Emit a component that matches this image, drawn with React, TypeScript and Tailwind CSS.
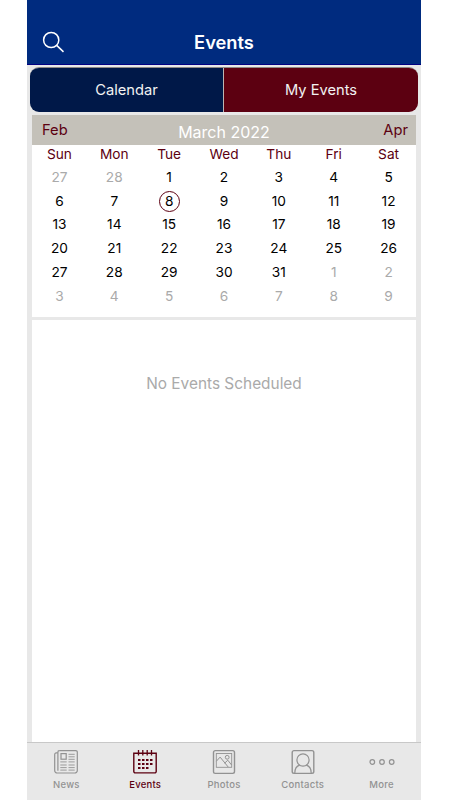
import React from "react";

const DAYS = ["Sun", "Mon", "Tue", "Wed", "Thu", "Fri", "Sat"];
const WEEKS = [
  [27, 28, 1, 2, 3, 4, 5],
  [6, 7, 8, 9, 10, 11, 12],
  [13, 14, 15, 16, 17, 18, 19],
  [20, 21, 22, 23, 24, 25, 26],
  [27, 28, 29, 30, 31, 1, 2],
  [3, 4, 5, 6, 7, 8, 9],
];

function isOutside(week: number, day: number) {
  return (week === 0 && day > 20) || (week >= 4 && day < 20);
}

function Icon({ children }: { children: React.ReactNode }) {
  return (
    <svg width="26" height="26" viewBox="0 0 26 26" fill="none" stroke="currentColor" strokeWidth="1.2">
      {children}
    </svg>
  );
}

const NewsIcon = () => (
  <Icon>
    <path d="M6.2 1.6h16.6a1.5 1.5 0 0 1 1.5 1.5v18.4a2.5 2.5 0 0 1-2.5 2.5H4.2a2.5 2.5 0 0 1-2.5-2.5V5.4a1.5 1.5 0 0 1 1.5-1.5h1.6" />
    <path d="M4.9 21.8V2.9a1.3 1.3 0 0 1 1.3-1.3" />
    <rect x="8" y="4.6" width="5.2" height="5.6" />
    <path d="M15.5 5.3h6.2M15.5 7.8h6.2M15.5 10.3h6.2M7.3 12.9h6.4M15.5 12.9h6.2M7.3 16h6.4M15.5 16h6.2M7.3 18.6h6.4M15.5 18.6h6.2M7.3 21.1h6.4M15.5 21.1h6.2" strokeWidth="0.9" />
  </Icon>
);

const EventsIcon = () => (
  <Icon>
    <path d="M1.8 4.2h22.4v18.2a1.5 1.5 0 0 1-1.5 1.5H3.3a1.5 1.5 0 0 1-1.5-1.5z" strokeWidth="1.4" />
    <path d="M6.5 1v5.5M10.8 1v5.5M15.2 1v5.5M19.5 1v5.5" strokeWidth="1.3" />
    <path d="M6 11h2.5M10 11h2.5M14 11h2.5M18 11h2.5M6 15h2.5M10 15h2.5M14 15h2.5M18 15h2.5M6 19h2.5M10 19h2.5M14 19h2.5" strokeWidth="2" />
  </Icon>
);

const PhotosIcon = () => (
  <Icon>
    <rect x="2.5" y="1.6" width="21" height="22.8" rx="1.8" strokeWidth="1.4" />
    <rect x="5.3" y="4.5" width="15.4" height="13.8" strokeWidth="0.9" />
    <path d="m5.4 12.2 3.7-4.1 8.1 9.9M13.6 14.2l3.2-3 3.8 4.8" strokeWidth="1" />
    <circle cx="16.2" cy="8.3" r="1.9" strokeWidth="1" />
  </Icon>
);

const ContactsIcon = () => (
  <Icon>
    <rect x="2.2" y="1.6" width="21.6" height="22.8" rx="1.8" strokeWidth="1.4" />
    <circle cx="13" cy="11" r="6.1" />
    <path d="M4.8 24c0-4.4 1.7-7 5-7.9M21.2 24c0-4.4-1.7-7-5-7.9" />
  </Icon>
);

const MoreIcon = () => (
  <Icon>
    <circle cx="3.3" cy="13" r="2.3" />
    <circle cx="13" cy="13" r="2.3" />
    <circle cx="22.7" cy="13" r="2.3" />
  </Icon>
);

const TABS = [
  { name: "News", icon: NewsIcon },
  { name: "Events", icon: EventsIcon },
  { name: "Photos", icon: PhotosIcon },
  { name: "Contacts", icon: ContactsIcon },
  { name: "More", icon: MoreIcon },
];

export default function App() {
  return (
    <div className="h-[800px] w-[450px] overflow-hidden bg-white pl-[27px] font-['Inter',sans-serif]">
      <div className="flex h-full w-[394px] flex-col bg-[#e8e8e8]">
        <header className="grid h-[65px] shrink-0 grid-cols-[1fr_auto_1fr] border-b border-[#000080] bg-[#002b7f] pt-[30px] text-white">
          <svg className="ml-[15px]" width="24" height="24" viewBox="0 0 24 24" fill="none" stroke="currentColor" strokeWidth="1.5">
            <circle cx="9.2" cy="10" r="7.6" />
            <path d="m14.7 15.4 6.8 6.5" />
          </svg>
          <h1 className="text-[18.3px] leading-[24px] font-semibold">Events</h1>
        </header>

        <div className="mx-[3px] mt-[2px] flex h-[45px] shrink-0 overflow-hidden rounded-[9px] border-t border-[#8d8985] text-[14.7px] text-[#f2f2f2]">
          <button className="w-[194px] border-r border-[#bcb6b3] bg-[#001848]">Calendar</button>
          <button className="flex-1 bg-[#5c0011]">My Events</button>
        </div>

        <section className="mx-[5px] mt-[3px] h-[202px] shrink-0 bg-white">
          <div className="grid h-[30px] grid-cols-[1fr_auto_1fr] bg-[#c4c1b9] text-[14.7px] leading-[30px] text-[#5c0011]">
            <span className="pl-[10px]">Feb</span>
            <span className="pt-[2px] text-[16px] text-white">March 2022</span>
            <span className="pr-[8px] text-right">Apr</span>
          </div>
          <div className="grid h-[20.5px] grid-cols-7 text-center text-[13.7px] leading-[18px] text-[#5c0011]">
            {DAYS.map((day) => (
              <span key={day}>{day}</span>
            ))}
          </div>
          {WEEKS.map((week, row) => (
            <div key={row} className="grid h-[23.8px] grid-cols-7 place-items-center text-[13.7px] leading-[21px] text-black">
              {week.map((day, column) => (
                <span
                  key={column}
                  className={
                    isOutside(row, day)
                      ? "text-[#aaaaaa]"
                      : row === 1 && day === 8
                        ? "flex size-[21px] items-center justify-center rounded-full border border-[#5c0011]"
                        : ""
                  }
                >
                  {day}
                </span>
              ))}
            </div>
          ))}
        </section>

        <main className="mx-[5px] mt-[3px] flex-1 bg-white pt-[53px] text-center text-[15.4px] leading-[22px] text-[#aaaaaa]">
          No Events Scheduled
        </main>

        <nav className="grid h-[58px] shrink-0 grid-cols-5 border-t border-[#c8c8c8] bg-[#e8e8e8]">
          {TABS.map(({ name, icon: TabIcon }) => (
            <button
              key={name}
              className={
                name === "Events"
                  ? "flex flex-col items-center pt-[6px] text-[#5c0011]"
                  : "flex flex-col items-center pt-[6px] text-[#929292]"
              }
            >
              <TabIcon />
              <span className="mt-[4px] text-[9.5px] leading-[12px] font-medium tracking-[0.25px]">{name}</span>
            </button>
          ))}
        </nav>
      </div>
    </div>
  );
}
